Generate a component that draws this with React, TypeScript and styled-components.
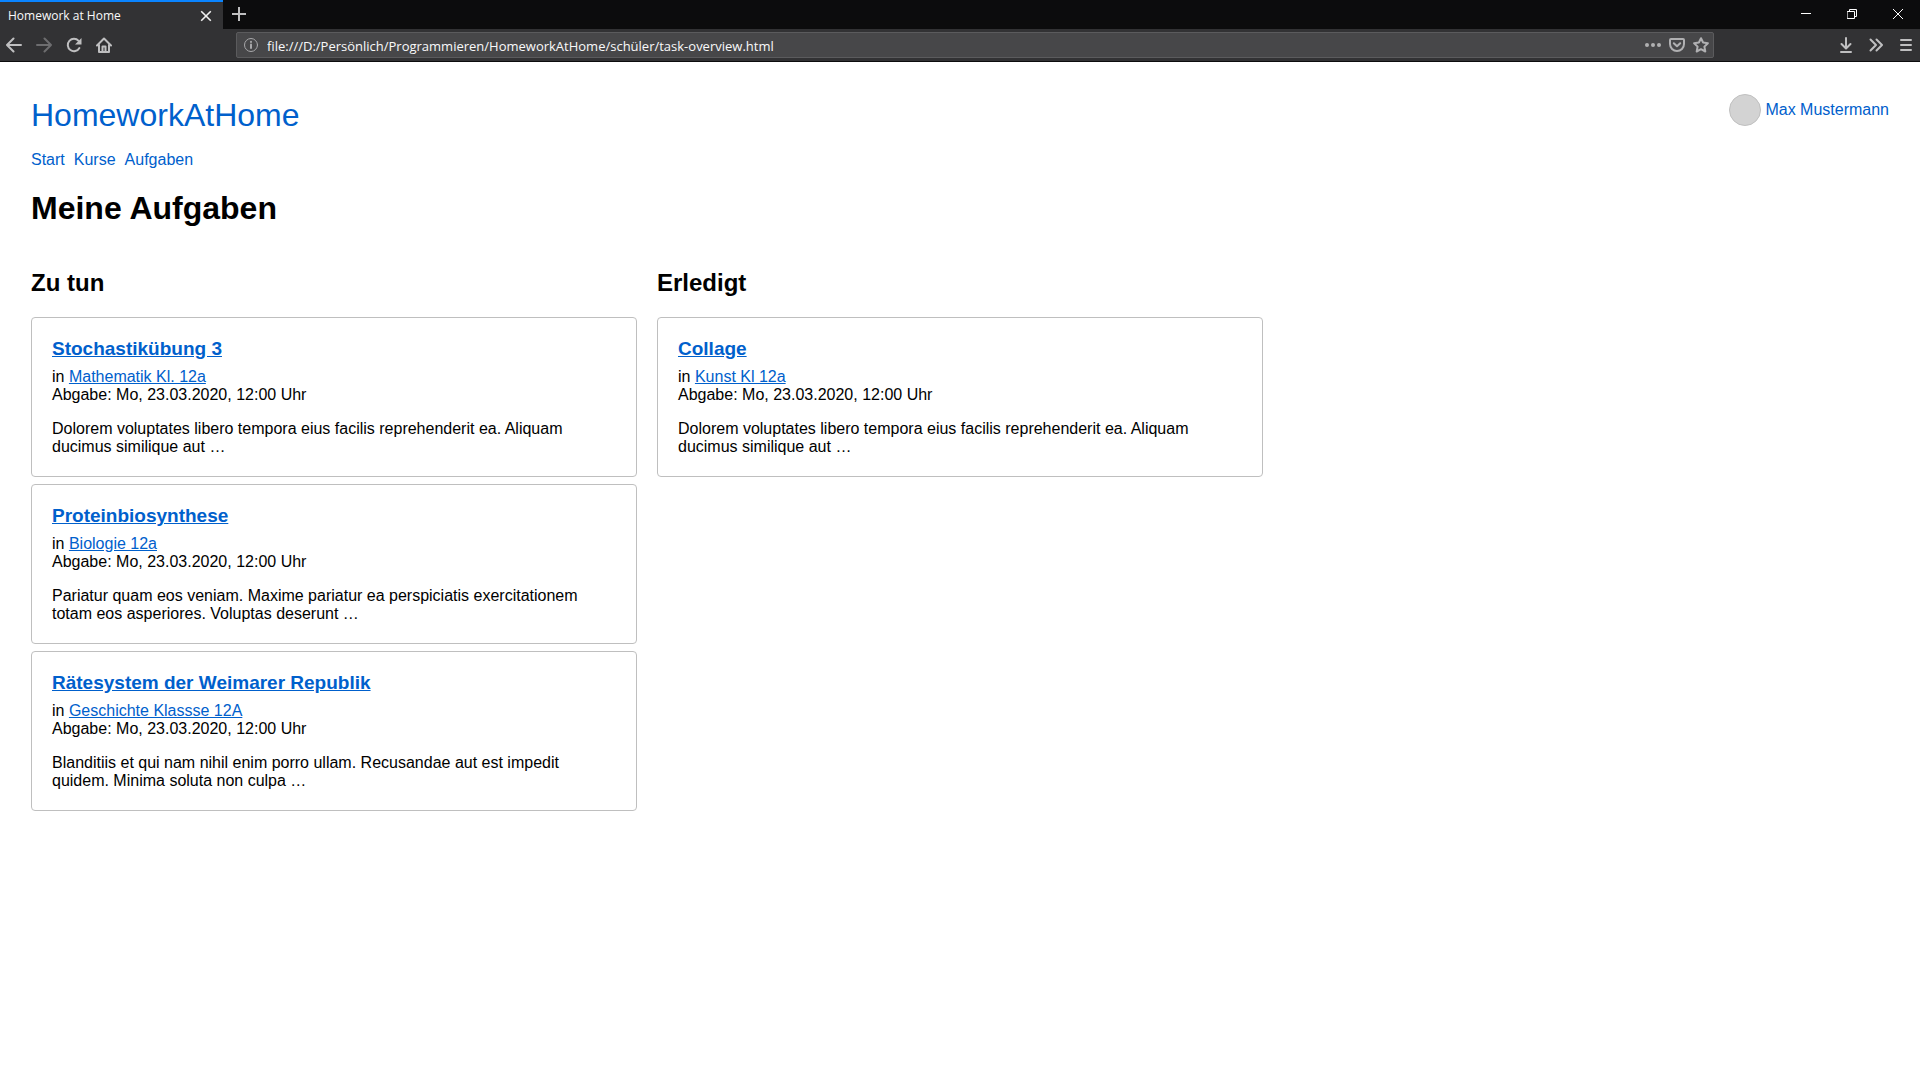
import React from "react";
import styled, { createGlobalStyle } from "styled-components";

const GlobalStyle = createGlobalStyle`
  *, *::before, *::after { box-sizing: border-box; }
  body {
    margin: 0;
    background: #fff;
    color: #000;
    font: 16px/18px "Liberation Sans", Arial, sans-serif;
  }
  h1, h2, h3, p { margin: 0; }
`;

const Chrome = styled.header`
  color: #f9f9fa;
  font-family: "Open Sans", "Segoe UI", sans-serif;
  background: #323234;
  border-bottom: 1px solid #0c0c0d;
`;

const TabBar = styled.div`
  display: flex;
  height: 29px;
  background: #0c0c0d;
`;

const Tab = styled.div`
  display: flex;
  align-items: center;
  justify-content: space-between;
  width: 223px;
  padding: 0 3px 0 8px;
  font-size: 12px;
  line-height: 16px;
  background: #323234;
  border-top: 2px solid #0a84ff;
`;

const ChromeButton = styled.button<{ $width?: number; $tone?: string }>`
  display: flex;
  align-items: center;
  justify-content: center;
  width: ${(p) => p.$width ?? 28}px;
  height: 28px;
  padding: 0;
  border: 0;
  background: none;
  color: ${(p) => p.$tone ?? "#bfbfc0"};
`;

const WindowControls = styled.div`
  display: flex;
  gap: 2px;
  margin-left: auto;
`;

const Toolbar = styled.div`
  display: flex;
  align-items: center;
  height: 32px;
`;

const ToolGroup = styled.div`
  display: flex;
  gap: 2px;
`;

const AddressBar = styled.div`
  display: flex;
  flex: 1;
  align-items: center;
  height: 26px;
  margin: 0 118px;
  background: #474749;
  border: 1px solid #5b5b5d;
  border-radius: 2px;
`;

const AddressInput = styled.input`
  flex: 1;
  min-width: 0;
  padding: 2px 2px 0;
  border: 0;
  outline: 0;
  background: none;
  color: #f9f9fa;
  font: 13px/20px "Open Sans", "Segoe UI", sans-serif;
`;

const Page = styled.main`
  padding: 32px 31px;
`;

const PageHeader = styled.div`
  display: flex;
  align-items: flex-start;
  justify-content: space-between;
  margin-bottom: 15px;
`;

const PlainLink = styled.a`
  color: #0060cc;
  text-decoration: none;
`;

const Brand = styled(PlainLink)`
  font-size: 32px;
  line-height: 42px;
`;

const User = styled(PlainLink)`
  display: flex;
  align-items: center;
  gap: 4px;
`;

const Avatar = styled.span`
  width: 32px;
  height: 32px;
  border: 1px solid #c0c0c0;
  border-radius: 50%;
  background: #d3d3d3;
`;

const Nav = styled.nav`
  display: flex;
  gap: 9px;
  margin-bottom: 21px;
`;

const PageTitle = styled.h1`
  margin-bottom: 42px;
  font-size: 32px;
  line-height: 37px;
`;

const Columns = styled.div`
  display: grid;
  grid-template-columns: repeat(3, 1fr);
  align-items: start;
  gap: 20px;
`;

const ColumnTitle = styled.h2`
  margin-bottom: 20px;
  font-size: 24px;
  line-height: 28px;
`;

const CardList = styled.div`
  display: grid;
  gap: 7px;
`;

const Card = styled.article`
  padding: 20px;
  border: 1px solid #bfbfbf;
  border-radius: 4px;
`;

const CardTitle = styled.h3`
  margin-bottom: 8px;
  font-size: 19px;
  line-height: 22px;
`;

const TextLink = styled.a`
  color: #0060cc;
`;

const Excerpt = styled.p`
  margin-top: 16px;
`;

type IconProps = { size?: number; width?: number; children: React.ReactNode };

const Icon = ({ size = 16, width = 2, children }: IconProps) => (
  <svg
    width={size}
    height={size}
    viewBox={`0 0 ${size} ${size}`}
    fill="none"
    stroke="currentColor"
    strokeWidth={width}
    strokeLinecap="round"
    strokeLinejoin="round"
    aria-hidden="true"
  >
    {children}
  </svg>
);

type Task = { title: string; course: string; due: string; text: string };

const due = "Mo, 23.03.2020, 12:00 Uhr";

const columns: { title: string; tasks: Task[] }[] = [
  {
    title: "Zu tun",
    tasks: [
      {
        title: "Stochastikübung 3",
        course: "Mathematik Kl. 12a",
        due,
        text: "Dolorem voluptates libero tempora eius facilis reprehenderit ea. Aliquam ducimus similique aut …",
      },
      {
        title: "Proteinbiosynthese",
        course: "Biologie 12a",
        due,
        text: "Pariatur quam eos veniam. Maxime pariatur ea perspiciatis exercitationem totam eos asperiores. Voluptas deserunt …",
      },
      {
        title: "Rätesystem der Weimarer Republik",
        course: "Geschichte Klassse 12A",
        due,
        text: "Blanditiis et qui nam nihil enim porro ullam. Recusandae aut est impedit quidem. Minima soluta non culpa …",
      },
    ],
  },
  {
    title: "Erledigt",
    tasks: [
      {
        title: "Collage",
        course: "Kunst Kl 12a",
        due,
        text: "Dolorem voluptates libero tempora eius facilis reprehenderit ea. Aliquam ducimus similique aut …",
      },
    ],
  },
];

const BrowserChrome = () => (
  <Chrome>
    <TabBar>
      <Tab>
        <span>Homework at Home</span>
        <ChromeButton aria-label="Tab schließen" $tone="#f0f0f0">
          <Icon width={1.6}><path d="M3.200 3.200l9.600 9.600M12.800 3.200l-9.600 9.600" strokeLinecap="butt" /></Icon>
        </ChromeButton>
      </Tab>
      <ChromeButton aria-label="Neuer Tab" $width={32}>
        <Icon><path d="M8 1v14M1 8h14" strokeLinecap="butt" /></Icon>
      </ChromeButton>
      <WindowControls>
        <ChromeButton aria-label="Minimieren" $width={44} $tone="#fff">
          <Icon size={10} width={1}><path d="M0 4.500h10" strokeLinecap="butt" /></Icon>
        </ChromeButton>
        <ChromeButton aria-label="Wiederherstellen" $width={44} $tone="#fff">
          <Icon size={10} width={1}>
            <path d="M.5 2.500h7v7h-7zM2.500 2.500v-2h7v7h-2" strokeLinejoin="miter" />
          </Icon>
        </ChromeButton>
        <ChromeButton aria-label="Fenster schließen" $width={44} $tone="#fff">
          <Icon size={10} width={1}><path d="M0 0l10 10M10 0L0 10" /></Icon>
        </ChromeButton>
      </WindowControls>
    </TabBar>
    <Toolbar>
      <ToolGroup>
        <ChromeButton aria-label="Zurück">
          <Icon><path d="M15 8H1M7.500 1.500L1 8l6.500 6.500" /></Icon>
        </ChromeButton>
        <ChromeButton aria-label="Vor" $tone="#6d6d6f">
          <Icon><path d="M1 8h14M8.500 1.500L15 8l-6.500 6.500" /></Icon>
        </ChromeButton>
        <ChromeButton aria-label="Neu laden">
          <Icon>
            <path d="M13.400 11A6.200 6.200 0 1 1 12.600 3.800" />
            <path d="M15.500 1v6.500H9z" fill="currentColor" stroke="none" />
          </Icon>
        </ChromeButton>
        <ChromeButton aria-label="Startseite">
          <Icon>
            <path d="M1 8.500L8 1.500l7 7M3 8v7h10V8" />
            <path d="M6.500 15V9.500h3V15" />
          </Icon>
        </ChromeButton>
      </ToolGroup>
      <AddressBar>
        <ChromeButton aria-label="Seiteninformationen" $tone="#a8a8aa">
          <Icon width={1}>
            <circle cx="8" cy="8" r="6.500" />
            <path d="M8 7.500v3.500M8 4.800v.2" strokeWidth="2" />
          </Icon>
        </ChromeButton>
        <AddressInput
          aria-label="Adresse"
          defaultValue="file:///D:/Persönlich/Programmieren/HomeworkAtHome/schüler/task-overview.html"
        />
        <ChromeButton aria-label="Seitenaktionen" $width={24} $tone="#b0b0b2">
          <Icon>
            <g fill="currentColor" stroke="none">
              <circle cx="2" cy="8" r="2" />
              <circle cx="8" cy="8" r="2" />
              <circle cx="14" cy="8" r="2" />
            </g>
          </Icon>
        </ChromeButton>
        <ChromeButton aria-label="In Pocket speichern" $width={24} $tone="#b0b0b2">
          <Icon>
            <path d="M2 2h12a1 1 0 0 1 1 1v4a7 7 0 0 1-14 0V3a1 1 0 0 1 1-1zM4.800 6.200L8 9.300l3.200-3.100" />
          </Icon>
        </ChromeButton>
        <ChromeButton aria-label="Lesezeichen" $width={24} $tone="#b0b0b2">
          <Icon>
            <path d="M8 1.200l2.100 4.300 4.800.7-3.500 3.400.9 4.900L8 12.200l-4.300 2.300.9-4.900L1.100 6.200l4.800-.7z" />
          </Icon>
        </ChromeButton>
      </AddressBar>
      <ToolGroup>
        <ChromeButton aria-label="Downloads">
          <Icon><path d="M8 1v10M3.500 7L8 11.500 12.500 7M3 15h10" /></Icon>
        </ChromeButton>
        <ChromeButton aria-label="Weitere Werkzeuge">
          <Icon><path d="M2.500 2.500L8 8l-5.500 5.500M8.500 2.500L14 8l-5.500 5.500" /></Icon>
        </ChromeButton>
        <ChromeButton aria-label="Menü">
          <Icon><path d="M3 3h10M3 8h10M3 13h10" /></Icon>
        </ChromeButton>
      </ToolGroup>
    </Toolbar>
  </Chrome>
);

const TaskCard = ({ task }: { task: Task }) => (
  <Card>
    <CardTitle>
      <TextLink href="#">{task.title}</TextLink>
    </CardTitle>
    <p>
      in <TextLink href="#">{task.course}</TextLink>
    </p>
    <p>Abgabe: {task.due}</p>
    <Excerpt>{task.text}</Excerpt>
  </Card>
);

export default function App() {
  return (
    <>
      <GlobalStyle />
      <BrowserChrome />
      <Page>
        <PageHeader>
          <Brand href="#">HomeworkAtHome</Brand>
          <User href="#">
            <Avatar />
            Max Mustermann
          </User>
        </PageHeader>
        <Nav>
          <PlainLink href="#">Start</PlainLink>
          <PlainLink href="#">Kurse</PlainLink>
          <PlainLink href="#">Aufgaben</PlainLink>
        </Nav>
        <PageTitle>Meine Aufgaben</PageTitle>
        <Columns>
          {columns.map((column) => (
            <section key={column.title}>
              <ColumnTitle>{column.title}</ColumnTitle>
              <CardList>
                {column.tasks.map((task) => (
                  <TaskCard key={task.title} task={task} />
                ))}
              </CardList>
            </section>
          ))}
        </Columns>
      </Page>
    </>
  );
}
